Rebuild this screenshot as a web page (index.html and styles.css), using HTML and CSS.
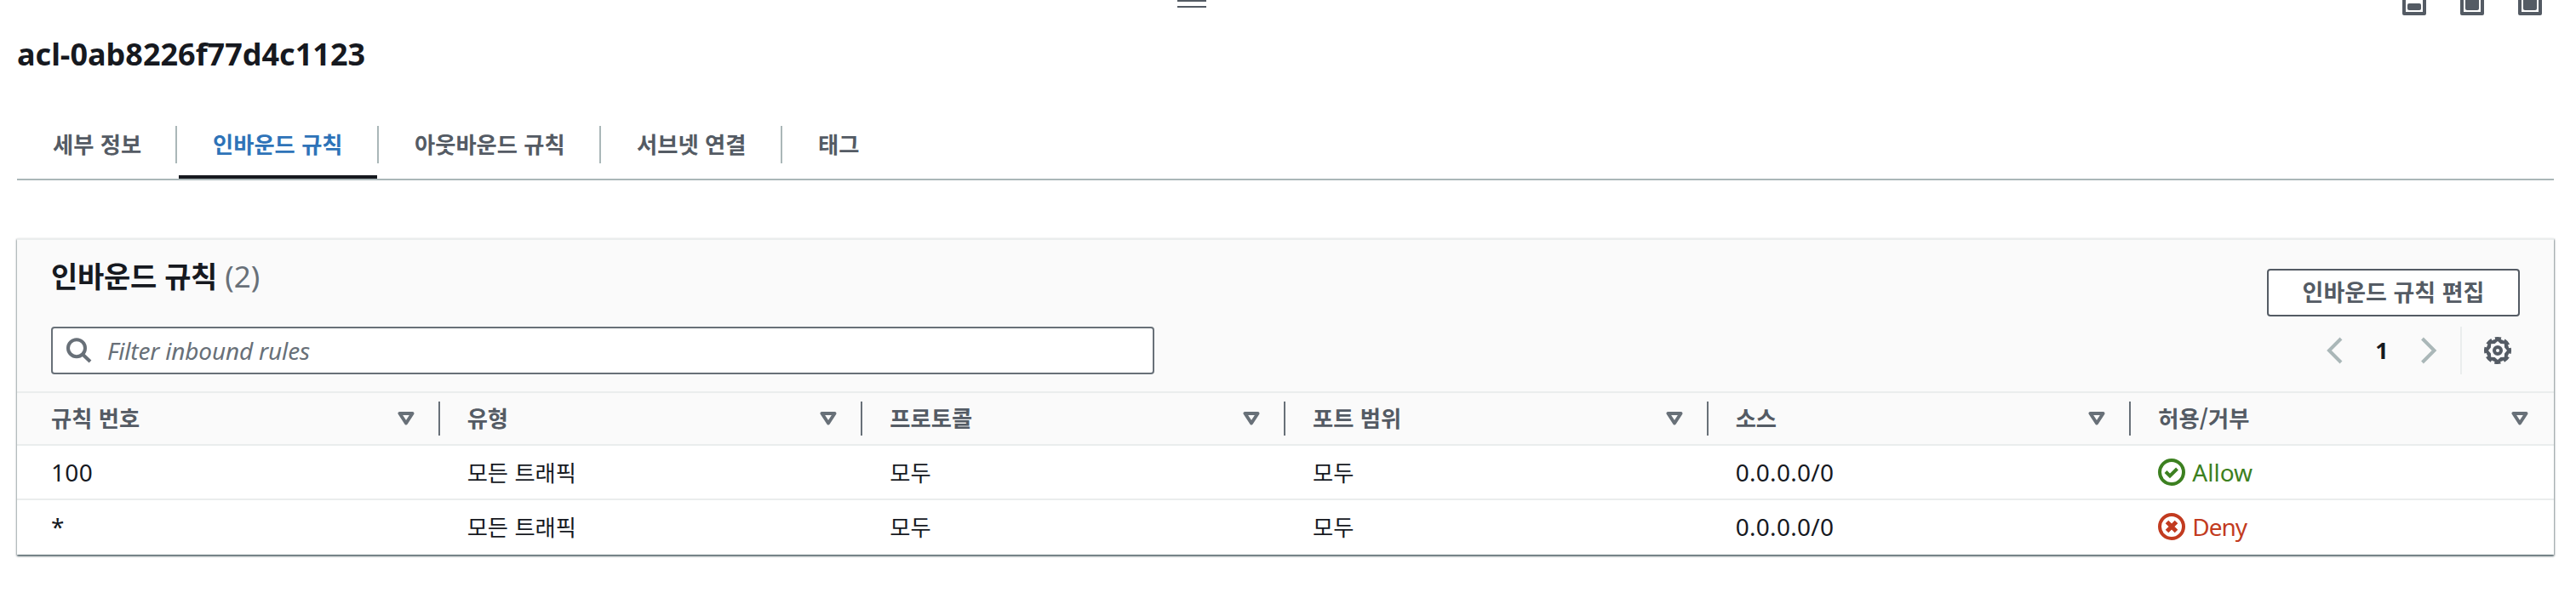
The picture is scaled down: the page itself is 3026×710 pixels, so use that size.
FILE: index.html
```html
<!DOCTYPE html>
<html lang="ko">
<head>
<meta charset="utf-8">
<title>acl-0ab8226f77d4c1123</title>
<link rel="stylesheet" href="styles.css">
</head>
<body>
<div class="splitbar">
  <svg class="grip" width="34" height="9" viewBox="0 0 34 9"><path d="M0 1h34M0 8h34" stroke="#545b64" stroke-width="2"/></svg>
  <div class="panel-sizes">
    <svg width="28" height="18" viewBox="0 0 28 18"><path d="M0 0h4v14h20V0h4v16q0 2-2 2H2q-2 0-2-2z"/><rect x="6" y="4" width="16" height="8" rx="2"/></svg>
    <svg width="28" height="18" viewBox="0 0 28 18"><path d="M0 0h4v14h20V0h4v16q0 2-2 2H2q-2 0-2-2z"/><rect x="6" y="-4" width="16" height="16" rx="2"/></svg>
    <svg width="28" height="18" viewBox="0 0 28 18"><path d="M0 0h4v14h20V0h4v16q0 2-2 2H2q-2 0-2-2z"/><rect x="6" y="-4" width="16" height="16" rx="2"/></svg>
  </div>
</div>
<main class="page">
  <h1 class="title">acl-0ab8226f77d4c1123</h1>
  <nav class="tabs">
    <a class="tab t1"><span>세부 정보</span></a>
    <a class="tab t2 active"><span>인바운드 규칙</span></a>
    <a class="tab t3"><span>아웃바운드 규칙</span></a>
    <a class="tab t4"><span>서브넷 연결</span></a>
    <a class="tab t5"><span>태그</span></a>
  </nav>
  <section class="card">
    <header class="card-head">
      <div class="left">
        <h2>인바운드 규칙 <span class="count">(2)</span></h2>
        <div class="search">
          <svg width="30" height="30" viewBox="0 0 30 30" fill="none" stroke="#687078" stroke-width="4"><circle cx="12" cy="12.2" r="10"/><path d="M19 19.5l9 8.5"/></svg>
          <span class="placeholder">Filter inbound rules</span>
        </div>
      </div>
      <div class="right">
        <button class="edit"><span>인바운드 규칙 편집</span></button>
        <div class="pager">
          <svg class="prev" width="20" height="32" viewBox="0 0 20 32"><path d="M18 2L4 16l14 14" fill="none" stroke="#aab7b8" stroke-width="4"/></svg>
          <span class="num">1</span>
          <svg class="next" width="20" height="32" viewBox="0 0 20 32"><path d="M1.500 2L15.500 16L1.500 30" fill="none" stroke="#aab7b8" stroke-width="4"/></svg>
          <span class="gearbox"><svg width="32" height="32" viewBox="0 0 32 32"><path fill="#545b64" fill-rule="evenodd" d="M16 2.500a13.500 13.500 0 1 0 0 27a13.500 13.500 0 1 0 0-27zM27 16L24.100 19.400L23.800 23.800L19.400 24.100L16 27L12.600 24.100L8.200 23.800L7.900 19.400L5 16L7.900 12.600L8.200 8.200L12.600 7.900L16 5L19.400 7.900L23.800 8.200L24.100 12.600z"/><circle cx="16" cy="16" r="14" fill="none" stroke="#545b64" stroke-width="4" stroke-dasharray="7 3.996" stroke-dashoffset="3.500"/><circle cx="16" cy="16" r="4" fill="none" stroke="#545b64" stroke-width="4"/></svg></span>
        </div>
      </div>
    </header>
    <div class="row thead">
      <div class="cell"><span>규칙 번호</span><svg class="sort" width="20" height="16" viewBox="0 0 20 16"><path d="M2.500 2h15L10 13.500z"/></svg></div>
      <div class="cell"><span>유형</span><svg class="sort" width="20" height="16" viewBox="0 0 20 16"><path d="M2.500 2h15L10 13.500z"/></svg></div>
      <div class="cell"><span>프로토콜</span><svg class="sort" width="20" height="16" viewBox="0 0 20 16"><path d="M2.500 2h15L10 13.500z"/></svg></div>
      <div class="cell"><span>포트 범위</span><svg class="sort" width="20" height="16" viewBox="0 0 20 16"><path d="M2.500 2h15L10 13.500z"/></svg></div>
      <div class="cell"><span>소스</span><svg class="sort" width="20" height="16" viewBox="0 0 20 16"><path d="M2.500 2h15L10 13.500z"/></svg></div>
      <div class="cell"><span>허용/거부</span><svg class="sort" width="20" height="16" viewBox="0 0 20 16"><path d="M2.500 2h15L10 13.500z"/></svg></div>
    </div>
    <div class="row">
      <div class="cell latin">100</div><div class="cell">모든 트래픽</div><div class="cell">모두</div><div class="cell">모두</div><div class="cell latin">0.0.0.0/0</div>
      <div class="cell latin allow"><svg width="32" height="32" viewBox="0 0 32 32" fill="none" stroke="currentColor" stroke-width="4"><circle cx="16" cy="16" r="14"/><path d="M9 15.500l5 5 8.500-8.500"/></svg>Allow</div>
    </div>
    <div class="row">
      <div class="cell latin">*</div><div class="cell">모든 트래픽</div><div class="cell">모두</div><div class="cell">모두</div><div class="cell latin">0.0.0.0/0</div>
      <div class="cell latin deny"><svg width="32" height="32" viewBox="0 0 32 32" fill="none" stroke="currentColor" stroke-width="4"><circle cx="16" cy="16" r="14"/><path d="M10.500 10.500l11 11M21.500 10.500l-11 11" stroke-width="5"/></svg>Deny</div>
    </div>
  </section>
</main>
</body>
</html>
```
FILE: styles.css
```css
* { box-sizing: border-box; }
body { margin: 0; background: #fff; color: #16191f; width: 3026px; height: 710px; overflow: hidden;
  font: 26.3px/40px "Noto Sans CJK KR", sans-serif; }
svg { display: block; flex: none; }
h1, h2 { margin: 0; font-weight: 700; }
.splitbar { height: 18px; padding: 0 40px 0 1383px; display: flex; justify-content: space-between; align-items: flex-start; }
.panel-sizes { display: flex; gap: 40px; fill: #545b64; }
.page { padding: 0 26px 0 20px; }
.title { font: 700 36px/44px "Noto Sans", sans-serif; letter-spacing: 0; padding-top: 24px; height: 130px; }
.tabs { display: flex; height: 64px; border-bottom: 2px solid #aab7b8; color: #545b64; font-weight: 700; }
.tab { position: relative; height: 44px; padding-left: 42px; line-height: 41px; white-space: nowrap; border-right: 2px solid #aab7b8; }
.t1 { width: 188px; }
.t2 { width: 237px; color: #2e73b8; }
.t3 { width: 261px; }
.t4 { width: 213px; }
.t5 { border: 0; }
.active::after { content: ""; position: absolute; left: 2px; right: 0; top: 58px; height: 4px; background: #16191f; }
.card { margin-top: 68px; height: 372px; border-top: 2px solid #eaeded; box-shadow: 0 2px 2px 0 rgba(0,28,36,.5), 1px 1px 2px 0 rgba(0,28,36,.3), -1px 1px 2px 0 rgba(0,28,36,.2); }
.card-head { height: 178px; padding: 0 40px; background: #fafafa; display: flex; justify-content: space-between; }
.card-head h2 { font-size: 34px; line-height: 44px; padding-top: 20px; height: 102px; letter-spacing: -.3px; }
.count { font-size: 35px; letter-spacing: 0; font-weight: 400; color: #687078; font-family: "Noto Sans", sans-serif; }
.search { width: 1296px; height: 56px; border: 2px solid #687078; border-radius: 4px; background: #fff; display: flex; align-items: center; padding-left: 16px; gap: 18px; }
.placeholder { font: italic 28px/40px "Noto Sans", sans-serif; letter-spacing: -.18px; color: #687078; }
.right { display: flex; flex-direction: column; align-items: flex-end; padding-top: 34px; gap: 12px; }
.edit { width: 297px; height: 56px; border: 2px solid #545b64; border-radius: 4px; background: #fff; color: #545b64; font: 700 27px/40px "Noto Sans CJK KR", sans-serif; padding: 0 0 3px; white-space: nowrap; }
.pager { display: flex; align-items: center; height: 56px; }
.num { font: 700 27px/40px "Noto Sans", sans-serif; width: 92px; text-align: center; }
.gearbox { margin-left: 26px; border-left: 2px solid #eaeded; height: 56px; width: 70px; padding: 12px 0 0 26px; }
.row { display: grid; grid-template-columns: repeat(6, 1fr); height: 64px; border-top: 2px solid #eaeded; align-items: center; background: #fff; }
.cell { padding-left: 32px; display: flex; align-items: center; white-space: nowrap; }
.cell:first-child { padding-left: 40px; }
.thead { height: 62px; background: #fafafa; color: #545b64; font-weight: 700; }
.thead .cell { height: 40px; line-height: 37px; justify-content: space-between; padding-right: 28px; border-right: 2px solid #687078; }
.thead .cell span { padding-bottom: 3px; }
.thead .cell:last-child { border: 0; padding-right: 30px; }
.sort { fill: none; stroke: #687078; stroke-width: 4; stroke-linejoin: round; }
.latin { font-family: "Noto Sans", sans-serif; font-size: 28px; letter-spacing: .3px; }
.allow, .deny { gap: 8px; }
.allow { color: #3c8020; letter-spacing: 0; }
.deny { color: #c23b20; letter-spacing: -1px; }
```
